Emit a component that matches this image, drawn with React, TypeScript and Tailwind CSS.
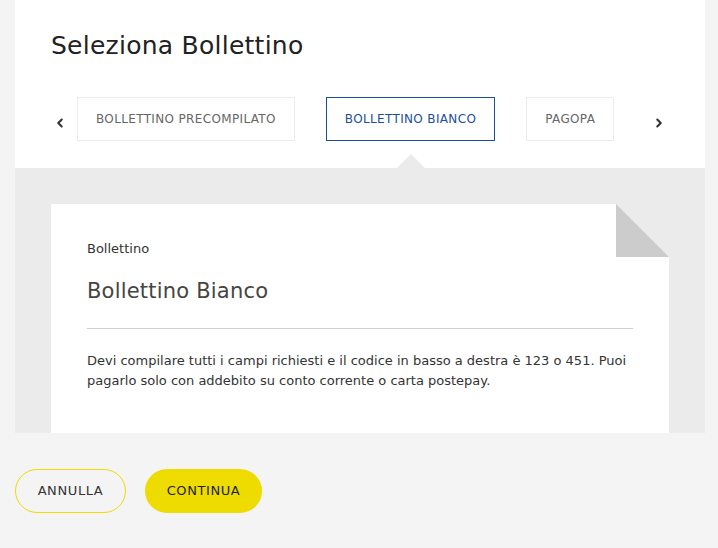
import { ChevronLeft, ChevronRight } from 'lucide-react'

const font = { fontFamily: '"DejaVu Sans", "Open Sans", sans-serif' }

const tabs = [
    { label: 'BOLLETTINO PRECOMPILATO', active: false },
    { label: 'BOLLETTINO BIANCO', active: true },
    { label: 'PAGOPA', active: false },
]

export default function App() {
    return (
        <div className="min-h-[548px] w-full bg-[#f4f4f4] px-[13px] pb-[34px]" style={{ fontFamily: '"Open Sans", sans-serif' }}>
            <div className="ml-[2px] w-[690px]">
                {/* header panel */}
                <div className="h-[168px] bg-white">
                    <h1 className="pl-[36px] pt-[28px] text-[25px] font-normal leading-[36px] tracking-[0.25px] text-[#222]" style={font}>
                        Seleziona Bollettino
                    </h1>
                    <div className="mt-[33px] flex items-center">
                        <button className="ml-[38px] mt-[8px] flex w-[14px] justify-center text-[#333]">
                            <ChevronLeft className="h-[16px] w-[16px]" strokeWidth={3.5} />
                        </button>
                        <div className="ml-[10px] flex gap-[31px]">
                            {tabs.map((tab) => (
                                <button
                                    key={tab.label}
                                    className={
                                        tab.active
                                            ? 'relative flex h-[44px] items-center border border-[#1a4f9c] px-[18px] text-[12px] tracking-[0.35px] text-[#1a4f9c]'
                                            : 'relative flex h-[44px] items-center border border-[#ececec] px-[18px] text-[12px] tracking-[0.35px] text-[#666]'
                                    }
                                    style={font}
                                >
                                    {tab.label}
                                    {tab.active && (
                                        <span className="absolute left-1/2 top-[56px] h-0 w-0 -translate-x-1/2 border-x-[14px] border-b-[14px] border-x-transparent border-b-[#ebebeb]" />
                                    )}
                                </button>
                            ))}
                        </div>
                        <button className="ml-[38px] mt-[8px] flex w-[14px] justify-center text-[#333]">
                            <ChevronRight className="h-[16px] w-[16px]" strokeWidth={3.5} />
                        </button>
                    </div>
                </div>

                {/* content area */}
                <div className="bg-[#ebebeb] px-[36px] pt-[36px]">
                    <div className="relative bg-white px-[36px] pb-[42px] pt-[36px]">
                        {/* folded corner */}
                        <div className="absolute right-0 top-0 h-[53px] w-[53px] bg-[#ebebeb]">
                            <div className="h-full w-full bg-[#cccccc] [clip-path:polygon(0_0,0_100%,100%_100%)]" />
                        </div>
                        <p className="text-[13px] leading-[18px] text-[#333]" style={font}>Bollettino</p>
                        <p className="mt-[19px] text-[21px] leading-[28px] tracking-[0.2px] text-[#444]" style={font}>Bollettino Bianco</p>
                        <div className="mt-[23px] h-px bg-[#cfcfcf]" />
                        <p className="mt-[22px] text-[13px] leading-[20px] text-[#333]" style={font}>
                            Devi compilare tutti i campi richiesti e il codice in basso a destra è 123 o 451. Puoi pagarlo solo con addebito su conto corrente o carta postepay.
                        </p>
                    </div>
                </div>
            </div>

            {/* actions */}
            <div className="mt-[36px] ml-[2px] flex gap-[19px]">
                <button className="h-[44px] w-[111px] rounded-full border border-[#eedc00] text-[13px] tracking-[0.6px] text-[#333]" style={font}>
                    ANNULLA
                </button>
                <button className="h-[44px] w-[117px] rounded-full bg-[#eedc00] text-[13px] tracking-[0.6px] text-[#222]" style={font}>
                    CONTINUA
                </button>
            </div>
        </div>
    )
}
